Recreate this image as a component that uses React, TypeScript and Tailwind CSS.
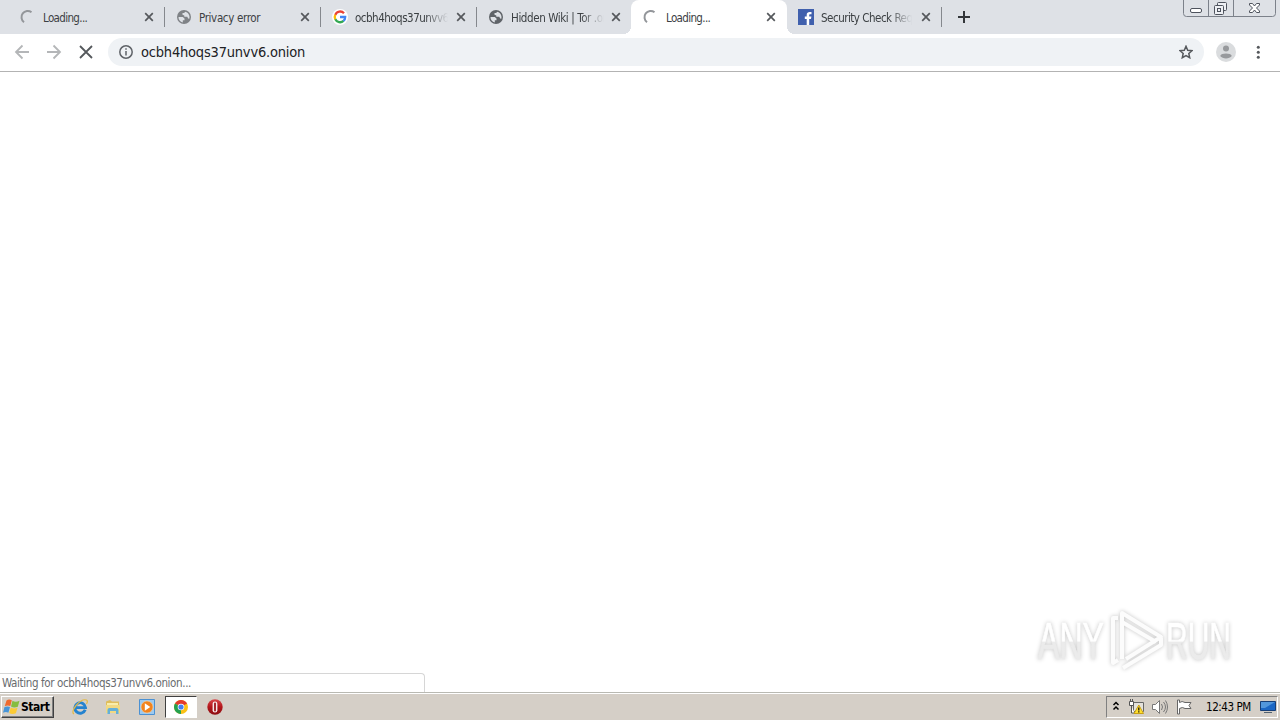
import React from 'react';

interface TabProps {
  title: string;
  icon: React.ReactNode;
  width: string;
  titleWidth: string;
  active?: boolean;
  faded?: boolean;
}

const Spinner = () => (
  <svg width="16" height="16" viewBox="0 0 16 16" fill="none">
    <path d="M12.500 3.200A6 6 0 1 0 5 13.200" stroke="#93969a" strokeWidth="2" />
  </svg>
);

const Globe = ({ color }: { color: string }) => (
  <svg width="16" height="16" viewBox="0 0 16 16">
    <circle cx="8" cy="8" r="7" fill={color} />
    <path d="M2.500 8h4.300l1.700 1.500v1.800H6.800v2.200C4.200 13 2.400 10.800 2.500 8ZM9.500 2.700 8 4H6.500v1.700l1.800.8v1.300h3l.8 1.700 1.200.2c1-3-1-6.300-3.800-7Z" fill="#dee1e6" />
  </svg>
);

const Google = () => (
  <svg width="16" height="16" viewBox="0 0 16 16">
    <circle cx="8" cy="8" r="8" fill="#fff" />
    <g fill="none" strokeWidth="2.3">
      <path d="M12 4.2A5.2 5.2 0 0 0 3.3 5.8" stroke="#ea4335" />
      <path d="M3.3 5.7a5.2 5.2 0 0 0 0 4.7" stroke="#fbbc05" />
      <path d="M3.3 10.3a5.2 5.2 0 0 0 8.2 1.6" stroke="#34a853" />
      <path d="M11.4 12A5.2 5.2 0 0 0 13.2 8H8" stroke="#4285f4" />
    </g>
  </svg>
);

const Facebook = () => (
  <svg width="16" height="16" viewBox="0 0 16 16">
    <path d="M0 0h16v16H0z" fill="#4060ad" />
    <path d="M8.7 16V10H6.8V7.5h1.9V5.8C8.7 3.9 9.9 3 11.7 3h1.8v2.3h-1.3c-.8 0-1 .4-1 1v1.2h2.2L13 10h-1.8v6Z" fill="#fff" />
  </svg>
);

const Tab = ({ title, icon, width, titleWidth, active, faded }: TabProps) => (
  <div className={`relative flex h-[34px] shrink-0 items-center pl-[11px] ${width} ${active ? 'rounded-t-lg bg-white' : ''}`}>
    {active && (
      <>
        <span className="absolute bottom-0 -left-2 h-2 w-2 bg-[radial-gradient(circle_at_0_0,transparent_8px,white_8px)]" />
        <span className="absolute -right-2 bottom-0 h-2 w-2 bg-[radial-gradient(circle_at_100%_0,transparent_8px,white_8px)]" />
      </>
    )}
    {icon}
    <span className={`ml-[7px] overflow-hidden pt-px text-[11.500px] leading-4 whitespace-nowrap text-[#3c4043] ${titleWidth} ${faded ? '[mask-image:linear-gradient(to_right,black_75%,transparent)]' : ''}`}>
      {title}
    </span>
    <svg className={`absolute top-[12px] ${active ? 'right-[11px]' : 'right-[10px]'}`} width="10" height="10" viewBox="0 0 10 10">
      <path d="m1.2 1.2 7.6 7.6m0-7.6L1.2 8.8" stroke="#55585c" strokeWidth="1.7" />
    </svg>
  </div>
);

const Divider = () => <span className="mt-[7px] h-5 w-px shrink-0 bg-[#85888d]" />;

const TabStrip = () => (
  <div className="flex h-[34px] justify-between bg-[#dee1e6]">
    <div className="flex pl-[8px]">
      <Tab title="Loading..." icon={<Spinner />} width="w-[156px]" titleWidth="w-[93px] pl-px tracking-[-0.65px]" />
      <Divider />
      <Tab title="Privacy error" icon={<Globe color="#7f8286" />} width="w-[155px]" titleWidth="w-[93px] tracking-[-0.35px]" />
      <Divider />
      <Tab title="ocbh4hoqs37unvv6.onion" icon={<Google />} width="w-[155px]" titleWidth="w-[93px] tracking-[-0.5px]" faded />
      <Divider />
      <Tab title="Hidden Wiki | Tor .onion" icon={<Globe color="#5f6368" />} width="w-[154px]" titleWidth="w-[93px] tracking-[-0.4px]" faded />
      <Tab title="Loading..." icon={<Spinner />} width="w-[156px]" titleWidth="w-[93px] pl-px tracking-[-0.65px]" active />
      <Tab title="Security Check Required" icon={<Facebook />} width="w-[154px]" titleWidth="w-[91px] tracking-[-0.5px]" faded />
      <Divider />
      <svg className="mt-[11px] ml-[16px]" width="12" height="12" viewBox="0 0 12 12">
        <path d="M6 0v12M0 6h12" stroke="#33363a" strokeWidth="2" />
      </svg>
    </div>
    <svg className="mr-[4px]" width="93" height="18" viewBox="0 0 93 18" fill="none" stroke="#7c818a">
      <path d="M.5 0v13.500q0 3 3 3h86q3 0 3-3V0M25.500 0v16M50.500 0v16" />
      <g stroke="#4e535d">
        <rect x="7.500" y="8.500" width="11" height="4" rx="1.500" fill="#fff" />
        <rect x="34.500" y="2.500" width="9" height="8" rx="1" fill="#eef0f4" />
        <rect x="31.500" y="5.500" width="9" height="9" rx="1" fill="#eef0f4" />
        <rect x="34.500" y="8.500" width="3" height="3" />
        <path d="M66.500 3.500h3l2 2.500 2-2.500h3v1.500l-3 3 3 3v1.500h-3l-2-2.500-2 2.500h-3V11l3-3-3-3Z" fill="#fff" />
      </g>
    </svg>
  </div>
);

const Toolbar = () => (
  <div className="flex h-[38px] items-center border-b border-[#b3b3b3] bg-white pb-px">
    <svg className="ml-[14px]" width="80" height="16" viewBox="0 0 80 16" fill="none" strokeWidth="1.8">
      <path d="M15 8H2m6.500-6.500L2 8l6.500 6.500M33 8h13m-6.500-6.500L46 8l-6.500 6.500" stroke="#b4b6b8" />
      <path d="m66 2 12 12m0-12L66 14" stroke="#55585c" />
    </svg>
    <div className="ml-[14px] flex h-7 w-[1096px] items-center rounded-full bg-[#eff2f5] pr-[11px] pl-[11px]">
      <svg width="14" height="14" viewBox="0 0 14 14" fill="none" stroke="#5f6368" strokeWidth="1.5">
        <circle cx="7" cy="7" r="6.200" />
        <path d="M7 6v4.500M7 3.300v1.500" />
      </svg>
      <span className="ml-[8px] flex-1 text-[14.500px] leading-5 tracking-[-0.2px] text-[#202124]">ocbh4hoqs37unvv6.onion</span>
      <svg width="14" height="14" viewBox="0 0 14 14" fill="none" stroke="#55585c" strokeWidth="1.5">
        <path d="m7 1.300 1.700 4 4.300.4-3.200 2.800.9 4.200L7 10.500l-3.700 2.200.9-4.200L1 5.700l4.300-.4Z" />
      </svg>
    </div>
    <svg className="ml-[12px]" width="20" height="20" viewBox="0 0 20 20">
      <circle cx="10" cy="10" r="10" fill="#dadcde" />
      <circle cx="10" cy="6.500" r="3" fill="#97999c" />
      <path d="M4.200 14c1-3.200 10.600-3.200 11.600 0-2.300 3.300-9.300 3.300-11.600 0Z" fill="#97999c" />
    </svg>
    <svg className="ml-[20px]" width="4" height="16" viewBox="0 0 4 16" fill="#55585c">
      <circle cx="2.300" cy="3.300" r="1.500" />
      <circle cx="2.300" cy="8.300" r="1.500" />
      <circle cx="2.300" cy="13.300" r="1.500" />
    </svg>
  </div>
);

const Watermark = () => (
  <div className="absolute right-[42px] bottom-[18px] flex items-center [filter:drop-shadow(0_0_2px_#c4c4c4)]">
    <svg width="204" height="66" viewBox="0 0 204 66" fill="none">
      <defs>
        <linearGradient id="mark" gradientUnits="userSpaceOnUse" x1="0" y1="12" x2="0" y2="54">
          <stop offset=".5" stopColor="#fff" />
          <stop offset=".53" stopColor="#ebebeb" />
        </linearGradient>
      </defs>
      <g fill="url(#mark)" stroke="url(#mark)" strokeWidth=".7" fontFamily="Liberation Sans Narrow, Liberation Sans, sans-serif" fontSize="51" fontWeight="400">
        <text x="4" y="51" textLength="66" lengthAdjust="spacingAndGlyphs">ANY</text>
        <text x="132" y="51" textLength="65" lengthAdjust="spacingAndGlyphs">RUN</text>
      </g>
      <g stroke="#fcfcfc" strokeWidth="4" strokeLinejoin="round">
        <path d="M88 51V5l39 24-35 22" />
        <path d="M84 10h-5v45l5-3M88 14l34 20M89 60l38-23v-7" />
      </g>
    </svg>
  </div>
);

const WindowsFlag = () => (
  <svg className="mb-px" width="17" height="16" viewBox="0 0 17 16">
    <path d="M3.500 1.500Q6-.2 8.800 1.300L7.300 7Q5 5.800 1.800 7Z" fill="#ef6a2e" />
    <path d="M9.500 1.800Q12.500 3.500 16.500 1.800L14.800 7.700Q11 9.300 8 7.500Z" fill="#86bd3f" />
    <path d="M1.500 8Q4.500 6.800 7 8L5.400 13.700Q2.800 12.500 0 13.800Z" fill="#4795d8" />
    <path d="M7.800 8.500Q11 10.300 14.500 8.700L12.900 14.300Q9 16 6.200 14Z" fill="#fccb35" />
  </svg>
);

const InternetExplorer = () => (
  <svg width="16" height="16" viewBox="0 0 16 16" fill="none">
    <path d="M13.200 10.800a5.300 5.300 0 1 1 .3-2.200H4" stroke="#2583cf" strokeWidth="2.900" />
    <path d="M2 15C-2.500 13 8-1 14.500 1q1.700 1 0 4" stroke="#e3b945" strokeWidth="1.200" />
  </svg>
);

const Explorer = () => (
  <svg width="16" height="16" viewBox="0 0 16 16">
    <path d="M1 2.500 5 1l2 1.500h7V13H1Z" fill="#dfbd5b" />
    <path d="M2 4h11v6H2Z" fill="#f8edab" />
    <path d="M1 6h14v8H1Z" fill="#f1d982" />
    <path d="M2.500 15v-4q0-2 2-2h7q2 0 2 2v4h-2.500v-3H5v3Z" fill="#64b0d8" />
  </svg>
);

const MediaPlayer = () => (
  <svg width="16" height="16" viewBox="0 0 16 16">
    <path d="M.5.5h15v15H.5z" fill="#9dcaf0" stroke="#4b91d3" />
    <circle cx="8" cy="8" r="6" fill="#f2831d" stroke="#f9d1a0" strokeWidth=".6" />
    <path d="m5.800 4.300 5.500 3.700-5.500 3.700Z" fill="#fff" />
  </svg>
);

const Chrome = () => (
  <svg width="14" height="14" viewBox="0 0 14 14">
    <circle cx="7" cy="7" r="7" fill="#fbc116" />
    <path d="M7 7 .94 3.500A7 7 0 0 1 13.060 3.500Z" fill="#e33b2e" />
    <path d="M7 7 .94 3.500A7 7 0 0 0 7 14Z" fill="#25a150" />
    <circle cx="7" cy="7" r="3.300" fill="#fff" />
    <circle cx="7" cy="7" r="2.600" fill="#437ff1" />
  </svg>
);

const Opera = () => (
  <svg width="16" height="16" viewBox="0 0 16 16">
    <defs>
      <linearGradient id="opera" x1="0" y1="0" x2="0" y2="1">
        <stop offset="0" stopColor="#d8474a" />
        <stop offset=".5" stopColor="#b3161b" />
        <stop offset="1" stopColor="#8c0d11" />
      </linearGradient>
    </defs>
    <circle cx="8" cy="8" r="7.700" fill="url(#opera)" />
    <rect x="5.600" y="2.500" width="4.800" height="11" rx="2.300" fill="#f6eaea" />
    <rect x="7.100" y="3.500" width="1.800" height="9" rx=".9" fill="#9c1419" />
  </svg>
);

const Tray = () => (
  <div className="flex h-[22px] w-[172px] items-center border border-t-[#808080] border-r-white border-b-white border-l-[#808080] pl-[5px]">
    <svg className="mb-[2px]" width="8" height="10" viewBox="0 0 8 10" fill="none" stroke="#000" strokeWidth="1.500">
      <path d="m1.500 4 2.500-2.500L6.500 4M1.500 8.500 4 6l2.500 2.500" />
    </svg>
    <svg className="ml-[8px]" width="16" height="16" viewBox="0 0 16 16">
      <path d="M5.500 3.500h10v9h-10z" fill="#e4e2dc" stroke="#666" />
      <path d="M1.500 2.500h4v4h-4zM2.500 0v2M4.500 0v2M3.500 7v7h3" fill="#fff" stroke="#555" />
      <path d="m10.800 6 4.700 8.500h-9.500Z" fill="#ffdf2e" stroke="#c79f16" />
      <path d="M10.800 8.500v3M10.800 12.300v1.200" stroke="#111" strokeWidth="1.300" />
    </svg>
    <svg className="ml-[8px]" width="17" height="16" viewBox="0 0 17 16" fill="none" stroke="#777">
      <path d="M.5 5.500h3l4-4v13l-4-4h-3Z" fill="#fff" />
      <path d="M9.500 5q2 3 0 6M11.500 3q4 5 0 10M13.500 1.500q4 6.500 0 13" />
    </svg>
    <svg className="ml-[7px]" width="16" height="16" viewBox="0 0 16 16" fill="#fff" stroke="#666">
      <path d="M1.500 1v14h2V9.500q3-2 5.500 0h6l-2-3 2-3H9q-3-2-5.500 0V1Z" />
    </svg>
    <span className="ml-[14px] w-[48px] pt-px text-[11.500px] tracking-[-0.45px] whitespace-nowrap text-black">12:43 PM</span>
    <svg className="ml-[6px]" width="16" height="14" viewBox="0 0 16 14">
      <path d="M.5 1.500h15v9H.5z" fill="#1c67c4" stroke="#173f77" />
      <path d="M1 2h14L5 8H1Z" fill="#5297dc" />
      <path d="M4 12.500h8" stroke="#52616f" />
    </svg>
  </div>
);

const Taskbar = () => (
  <div className="flex h-[27px] items-center justify-between border-t border-white bg-[#d5cfc7] pr-[2px] pl-px">
    <div className="flex items-center">
      <div className="flex h-[22px] w-[53px] items-center border border-t-white border-r-[#404040] border-b-[#404040] border-l-white pl-px shadow-[inset_-1px_-1px_#808080]">
        <WindowsFlag />
        <span className="ml-px text-[12px] font-bold tracking-[-0.45px] text-black">Start</span>
      </div>
      <div className="ml-[18px] flex items-center">
        <InternetExplorer />
        <span className="w-[17px]" />
        <Explorer />
        <span className="w-[18px]" />
        <MediaPlayer />
      </div>
      <div className="ml-[10px] flex h-[22px] w-[32px] items-center justify-center border border-t-[#404040] border-r-white border-b-white border-l-[#404040] bg-white">
        <Chrome />
      </div>
      <span className="ml-[10px]"><Opera /></span>
    </div>
    <Tray />
  </div>
);

export default function App() {
  return (
    <div className="flex h-[720px] w-[1280px] flex-col overflow-hidden bg-white font-['DejaVu_Sans_Condensed','DejaVu_Sans',sans-serif] [font-stretch:condensed]">
      <TabStrip />
      <Toolbar />
      <main className="relative flex flex-1 items-end border-b border-[#b9b9b2]">
        <div className="h-[19px] w-[425px] rounded-tr border-t border-r border-[#d6d6d6] pl-[2px] text-[11.500px] leading-[19px] tracking-[-0.38px] text-[#686b6e]">
          Waiting for ocbh4hoqs37unvv6.onion...
        </div>
        <Watermark />
      </main>
      <Taskbar />
    </div>
  );
}
